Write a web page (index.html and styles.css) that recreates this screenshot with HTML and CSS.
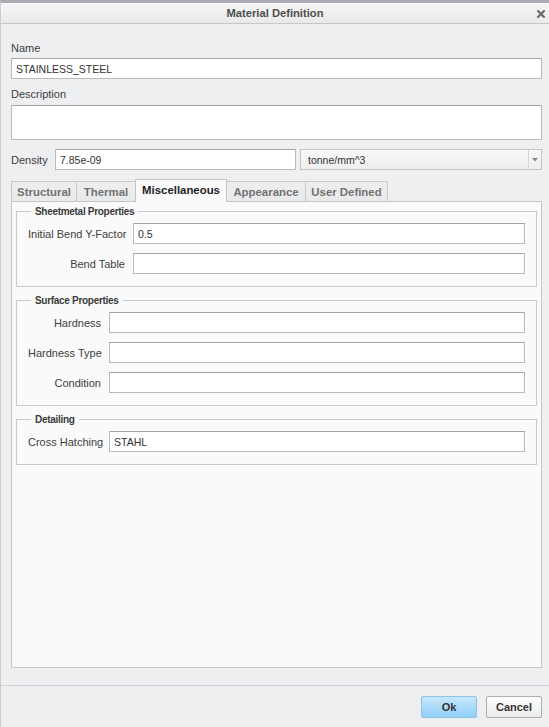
FILE: index.html
```html
<!DOCTYPE html>
<html>
<head>
<meta charset="utf-8">
<title>Material Definition</title>
<link rel="stylesheet" href="styles.css">
</head>
<body>
<div class="window">
  <div class="titlebar">
    <div class="title">Material Definition</div>
    <svg class="close" width="8" height="8" viewBox="0 0 8 8"><path d="M1 1L7 7M7 1L1 7" stroke="#6b6b6b" stroke-width="2.2" stroke-linecap="square"/></svg>
  </div>
  <div class="content">
    <div class="field-label">Name</div>
    <input class="text-input" type="text" value="STAINLESS_STEEL">
    <div class="field-label desc-label">Description</div>
    <textarea class="text-area"></textarea>
    <div class="density-row">
      <span class="density-label">Density</span>
      <input class="text-input density-input" type="text" value="7.85e-09">
      <div class="select"><span class="select-text">tonne/mm^3</span><span class="select-arrow"><svg width="6" height="4" viewBox="0 0 6 4"><path d="M0 0H6L3 3.5Z" fill="#8a8a8a"/></svg></span></div>
    </div>
    <div class="tabs">
      <div class="tab w1">Structural</div>
      <div class="tab w2">Thermal</div>
      <div class="tab w3 active">Miscellaneous</div>
      <div class="tab w4">Appearance</div>
      <div class="tab w5">User Defined</div>
    </div>
    <div class="panel">
      <fieldset class="group">
        <legend>Sheetmetal Properties</legend>
        <div class="rows wide">
          <label class="row-label">Initial Bend Y-Factor</label>
          <input class="text-input" type="text" value="0.5">
          <label class="row-label">Bend Table</label>
          <input class="text-input" type="text" value="">
        </div>
      </fieldset>
      <fieldset class="group">
        <legend>Surface Properties</legend>
        <div class="rows narrow">
          <label class="row-label">Hardness</label>
          <input class="text-input" type="text" value="">
          <label class="row-label">Hardness Type</label>
          <input class="text-input" type="text" value="">
          <label class="row-label">Condition</label>
          <input class="text-input" type="text" value="">
        </div>
      </fieldset>
      <fieldset class="group">
        <legend>Detailing</legend>
        <div class="rows narrow">
          <label class="row-label">Cross Hatching</label>
          <input class="text-input" type="text" value="STAHL">
        </div>
      </fieldset>
    </div>
  </div>
  <div class="footer">
    <button class="btn btn-primary">Ok</button>
    <button class="btn">Cancel</button>
  </div>
</div>
</body>
</html>
```
FILE: styles.css
```css
* { box-sizing: border-box; }
html, body { margin: 0; padding: 0; }
body {
  font-family: "Liberation Sans", Arial, sans-serif;
  font-size: 11px;
  color: #3d3d3d;
  background: #eeeff1;
}
.window {
  width: 549px;
  height: 727px;
  display: flex;
  flex-direction: column;
  background: #eeeff1;
  border-top: 3px solid #a9acb0;
  border-left: 1px solid #c9cbcd;
}
.titlebar {
  flex: none;
  height: 21px;
  display: grid;
  grid-template-columns: 1fr auto 1fr;
  align-items: center;
  background: linear-gradient(#f6f6f7, #e8e9ea);
  border-bottom: 1px solid #c5c7c9;
}
.title {
  grid-column: 2;
  font-weight: bold;
  font-size: 11.2px;
  color: #4e4e4e;
}
.close {
  grid-column: 3;
  justify-self: end;
  margin-right: 4px;
  margin-top: 1px;
}
.content {
  flex: 1;
  display: flex;
  flex-direction: column;
  padding: 17px 7px 17px 10px;
  min-height: 0;
}
.field-label {
  line-height: 14px;
  color: #404040;
}
.desc-label { margin-top: 8px; }
.text-input {
  display: block;
  width: 100%;
  height: 21px;
  margin: 3px 0 0;
  padding: 0 4px;
  border: 1px solid #bababa;
  border-top-color: #a4a4a4;
  background: #fff;
  font-family: "Liberation Sans", Arial, sans-serif;
  font-size: 10.5px;
  color: #333;
  outline: none;
}
.text-area {
  display: block;
  width: 100%;
  height: 35px;
  margin: 4px 0 0;
  border: 1px solid #bababa;
  border-top-color: #a4a4a4;
  background: #fff;
  resize: none;
  outline: none;
}
.density-row {
  margin-top: 9px;
  height: 21px;
  display: flex;
  align-items: center;
}
.density-label {
  flex: none;
  width: 44px;
}
.density-row .density-input {
  flex: none;
  width: 241px;
  margin: 0 4px 0 0;
}
.select {
  flex: 1;
  min-width: 0;
  height: 21px;
  display: flex;
  align-items: stretch;
  border: 1px solid #c4c4c4;
  background: linear-gradient(#f8f8f8, #efefef);
  font-size: 10.5px;
  color: #333;
}
.select-text {
  flex: 1;
  display: flex;
  align-items: center;
  padding-left: 7px;
}
.select-arrow {
  flex: none;
  width: 13px;
  border-left: 1px solid #d6d6d6;
  display: flex;
  align-items: center;
  justify-content: center;
}
.tabs {
  margin-top: 9px;
  height: 22px;
  display: flex;
  align-items: flex-end;
}
.tab {
  height: 20px;
  display: flex;
  align-items: center;
  justify-content: center;
  border: 1px solid #c9c9c9;
  border-bottom: none;
  background: linear-gradient(#eeeeef, #e8e9ea);
  font-weight: bold;
  font-size: 11.4px;
  color: #727272;
  white-space: nowrap;
}
.tab + .tab { margin-left: -1px; }
.w1 { width: 66px; }
.w2 { width: 60px; }
.w3 { width: 92px; }
.w4 { width: 80px; }
.w5 { width: 83px; }
.tab.active {
  height: 23px;
  margin-bottom: -1px;
  position: relative;
  z-index: 1;
  background: #fafafa;
  border-color: #c4c5c6;
  color: #1f1f1f;
  padding-bottom: 2px;
}
.panel {
  flex: 1;
  border: 1px solid #c6c7c8;
  background: #fafafa;
  padding: 3px 4px 0 4px;
}
.group {
  margin: 0;
  min-width: 0;
  border: 1px solid #c9cacc;
  padding: 5px 11px 12px 11px;
}
.group + .group { margin-top: 7px; }
.group legend {
  font-weight: bold;
  font-size: 10px;
  letter-spacing: -0.3px;
  line-height: 13px;
  padding: 0 4px;
  margin-left: 3px;
  color: #3a3a3a;
}
.rows {
  display: grid;
  column-gap: 8px;
  row-gap: 9px;
  align-items: center;
}
.rows.wide { grid-template-columns: 97px 1fr; }
.rows.narrow { grid-template-columns: 73px 1fr; }
.rows .text-input { margin: 0; }
.row-label {
  text-align: right;
  white-space: nowrap;
  color: #404040;
}
.footer {
  flex: none;
  height: 42px;
  border-top: 1px solid #cfd1d4;
  display: flex;
  justify-content: flex-end;
  align-items: flex-start;
  gap: 9px;
  padding: 10px 7px 0 0;
}
.btn {
  width: 56px;
  height: 22px;
  margin: 0;
  padding: 0;
  border: 1px solid #aeaeae;
  border-radius: 2px;
  background: linear-gradient(#fdfdfd, #ececec);
  font-family: "Liberation Sans", Arial, sans-serif;
  font-weight: bold;
  font-size: 11px;
  color: #333;
}
.btn-primary {
  border-color: #8dc3e8;
  background: linear-gradient(#c7e7fc, #92cff8);
}
```
